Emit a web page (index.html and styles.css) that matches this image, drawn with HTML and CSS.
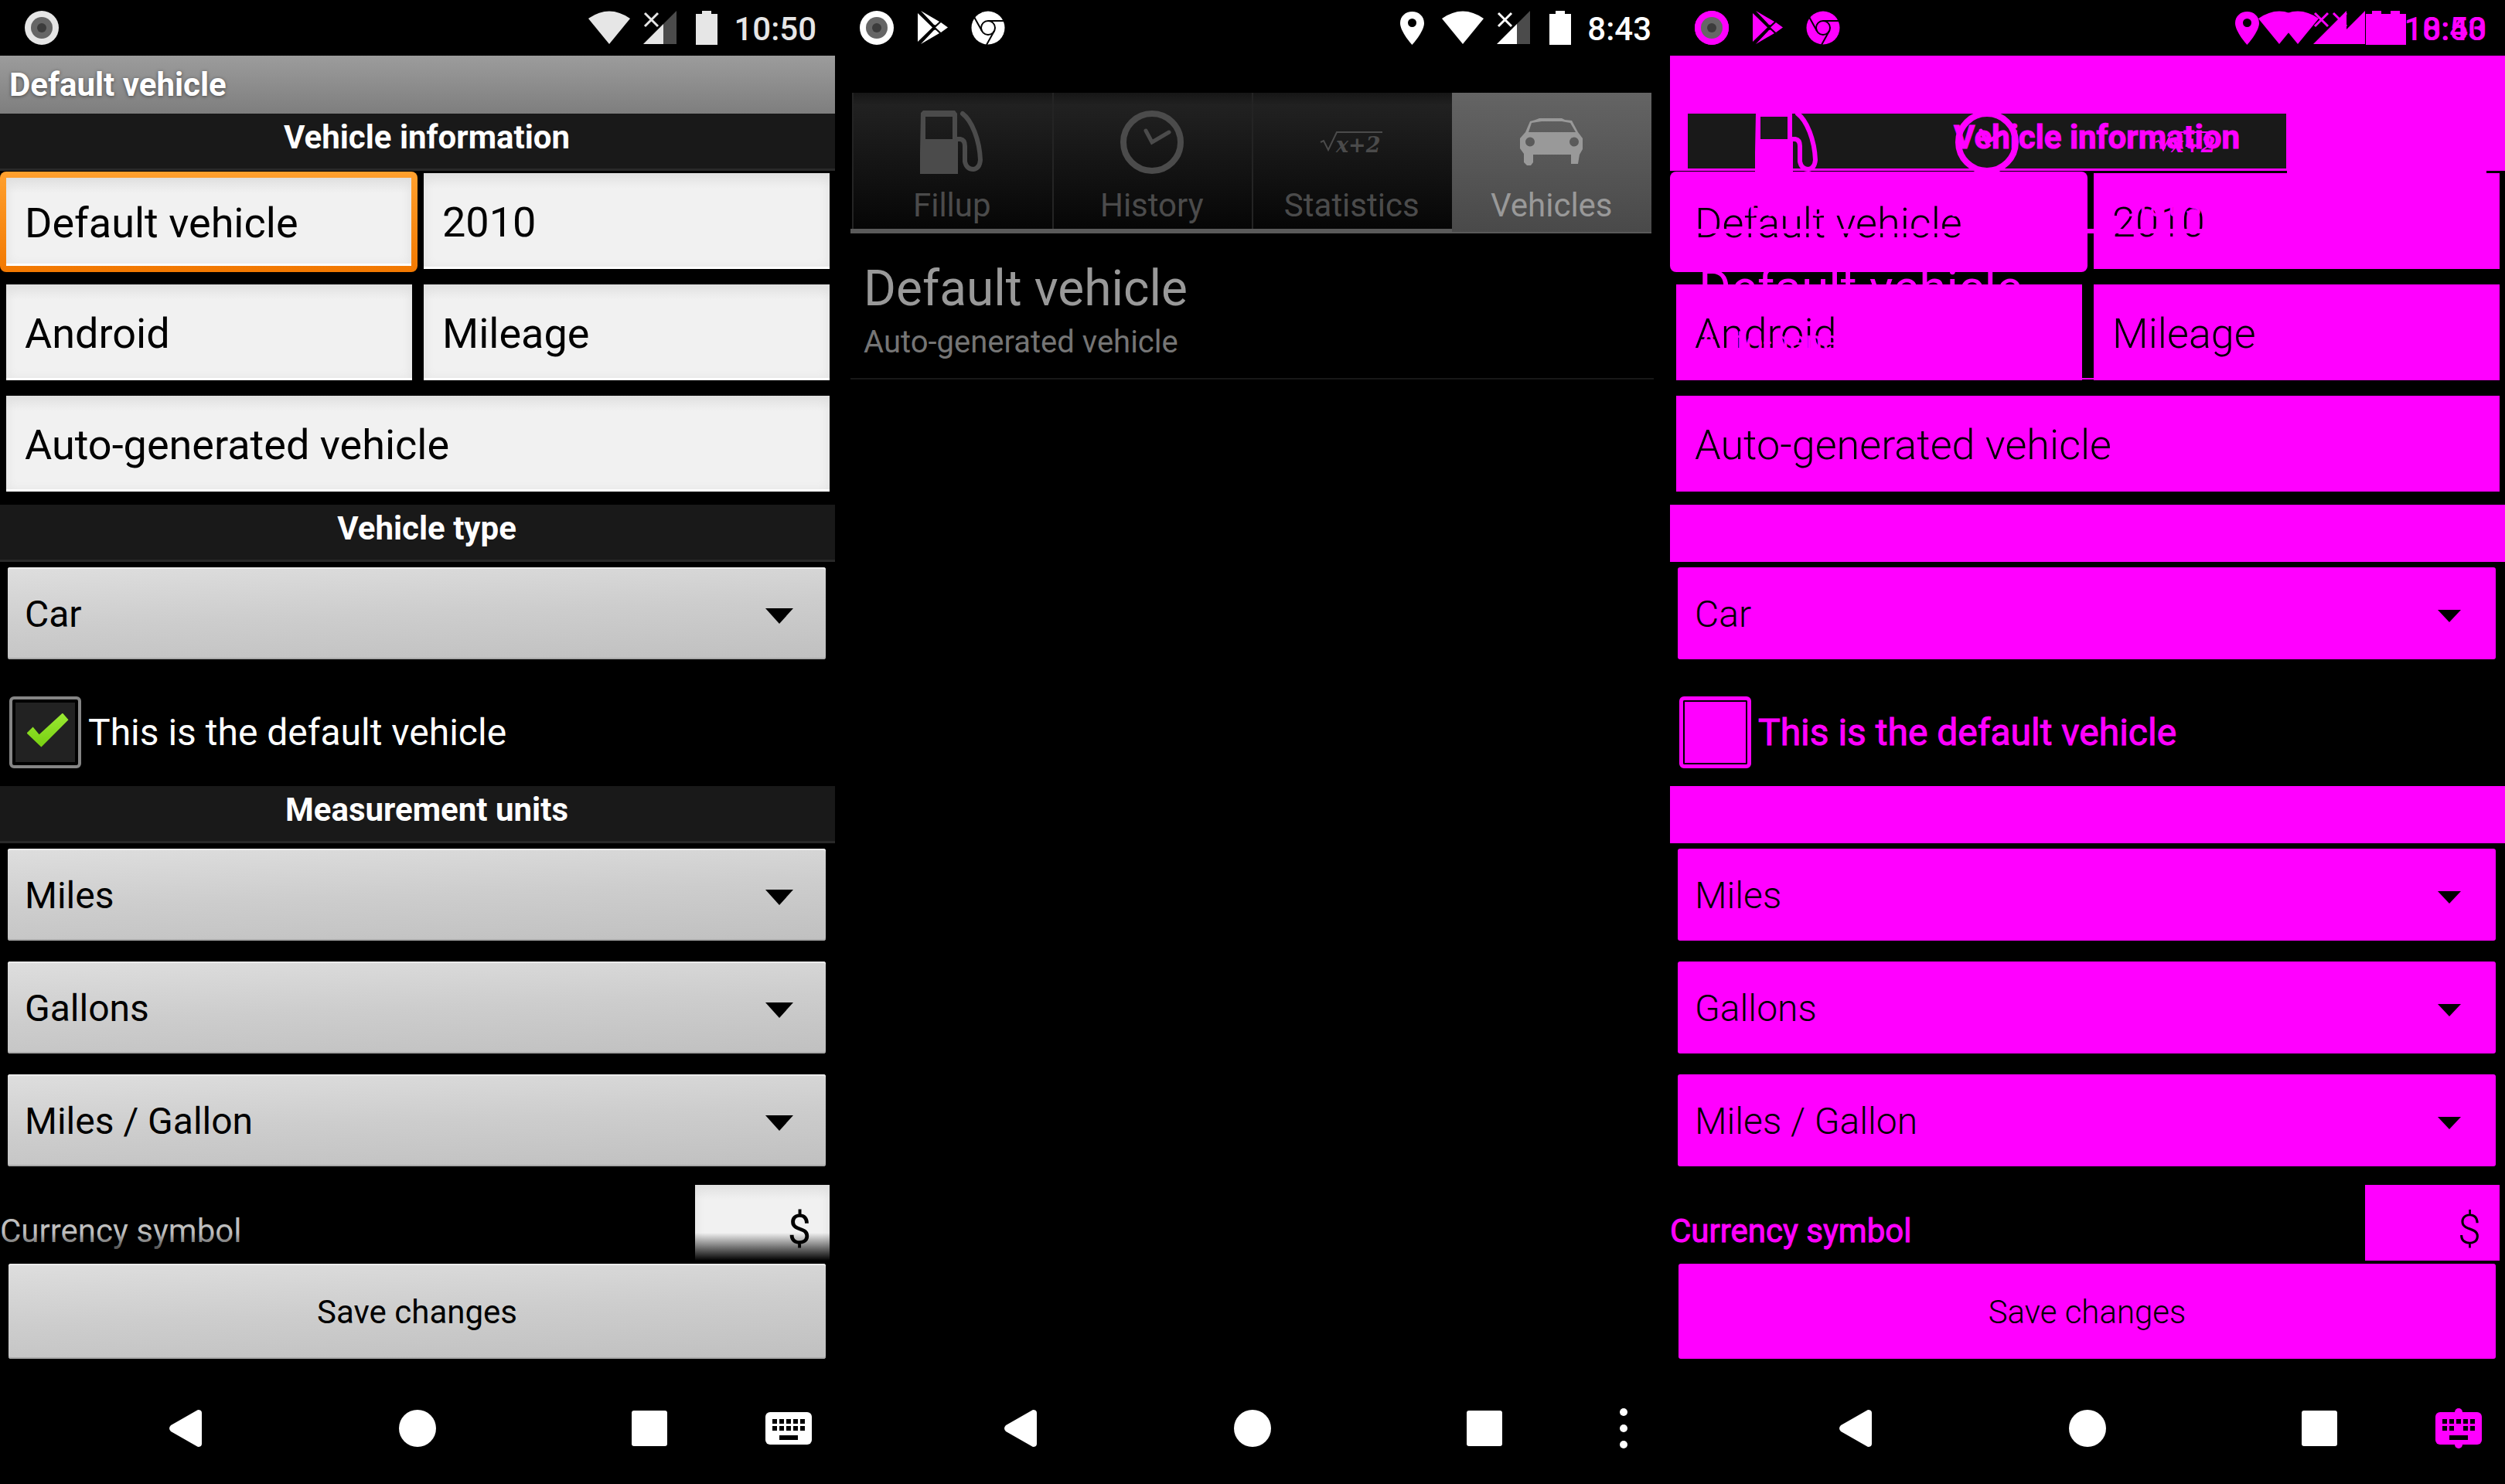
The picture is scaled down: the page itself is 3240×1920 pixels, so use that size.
FILE: index.html
```html
<!DOCTYPE html>
<html lang="en">
<head>
<meta charset="utf-8">
<meta name="viewport" content="width=device-width, initial-scale=1">
<title>Default vehicle</title>
<link rel="stylesheet" href="styles.css">
</head>
<body>
<svg class="sprite" aria-hidden="true">
  <symbol id="record" viewBox="0 0 44 44"><circle cx="22" cy="22" r="22" fill="currentColor"/><circle cx="22" cy="22" r="14" fill="#666"/><circle cx="22" cy="22" r="6" fill="#3c3c3c"/></symbol>
  <symbol id="play" viewBox="0 0 44 44"><path fill="currentColor" d="M3 3L22 21.500L3 40zM7 0L31 14L26 18.500L24 18zM33 15L42 21.500L33 28L26 21.500zM7 43L31 29L26 24.500L24 25z"/></symbol>
  <symbol id="chrome" viewBox="0 0 44 44"><circle cx="22" cy="22" r="21.500" fill="currentColor"/><g fill="none" stroke="#000" stroke-width="2"><circle cx="22" cy="22" r="9"/><path d="M22 13H42M4 8L14 26M30 26L20 44"/></g></symbol>
  <symbol id="pin" viewBox="0 0 31 44"><path fill="currentColor" fill-rule="evenodd" d="M15.500 1C7 1 0 7 0 16C0 27 15.500 44 15.500 44S31 27 31 16C31 7 24 1 15.500 1zM15.500 10a5.500 5.500 0 1 1 0 11a5.500 5.500 0 1 1 0-11z"/></symbol>
  <symbol id="wifi" viewBox="0 0 54 44"><path fill="currentColor" d="M27 43L0 10Q27-9 54 10z"/></symbol>
  <symbol id="signal" viewBox="0 0 43 44"><path class="signal-rest" d="M26 17L43 0V43H26z"/><path fill="currentColor" d="M0 43L26 17V43z"/><path fill="none" stroke="currentColor" stroke-width="3" d="M2 3L19 20M19 3L2 20"/></symbol>
  <symbol id="battery" viewBox="0 0 28 44"><path fill="currentColor" d="M8 0H20V4H28V44H0V4H8z"/></symbol>
  <symbol id="pump" viewBox="0 0 82 82"><path fill="currentColor" fill-rule="evenodd" d="M4 0H45L48 4V34H49V82H0V54L1 3zM7 8H42V37H7z"/><path fill="none" stroke="currentColor" stroke-width="6" stroke-linecap="round" d="M48 37H52Q58 38 58 46V66Q60 76 69 76Q77 75 78 64C77 38 67 13 55 4"/></symbol>
  <symbol id="history" viewBox="0 0 82 82"><g fill="none" stroke="currentColor"><circle cx="41" cy="41" r="37" stroke-width="8"/><path stroke-width="5" stroke-linecap="round" d="M33 26L41 41L63 28"/></g></symbol>
  <symbol id="car" viewBox="0 0 82 82"><path fill="currentColor" fill-rule="evenodd" transform="translate(0 9)" d="M25 1H54L58 3L67 4L75 19L81 27V41L77 48L75 60H66V48H17V58L14 62H9L5 58V47L0 40V27L7 19L13 5L20 3zM15 7L28 5H54L65 7L72 19H11zM13 25.500a6 6 0 1 0 0 12a6 6 0 1 0 0-12zM70 25.500a6 6 0 1 0 0 12a6 6 0 1 0 0-12z"/></symbol>
  <symbol id="back" viewBox="0 0 48 48"><path fill="currentColor" d="M40 0Q45 0 45 4V44Q45 48 40 48L5 28Q1 24 5 20z"/></symbol>
  <symbol id="home" viewBox="0 0 48 48"><circle cx="24" cy="24" r="24" fill="currentColor"/></symbol>
  <symbol id="recent" viewBox="0 0 48 48"><rect x="1" y="1" width="46" height="46" rx="3" fill="currentColor"/></symbol>
  <symbol id="keyboard" viewBox="0 0 60 42"><rect width="60" height="42" rx="6" fill="currentColor"/><path d="M9 9h6v6H9zM18 9h6v6H18zM27 9h6v6H27zM36 9h6v6H36zM45 9h6v6H45zM9 18h6v6H9zM18 18h6v6H18zM27 18h6v6H27zM36 18h6v6H36zM45 18h6v6H45zM18 30h24v6H18z"/></symbol>
  <symbol id="more" viewBox="0 0 12 54"><g fill="currentColor"><circle cx="6" cy="6" r="5"/><circle cx="6" cy="27" r="5"/><circle cx="6" cy="48" r="5"/></g></symbol>
</svg>

<main class="screens">
  <section class="screen screen-form" aria-label="Vehicle form">
    <header class="status">
      <svg class="ic-square"><use href="#record"/></svg>
      <div class="status-right"><svg class="ic-wifi"><use href="#wifi"/></svg><svg class="ic-signal"><use href="#signal"/></svg><svg class="ic-battery"><use href="#battery"/></svg><time>10:50</time></div>
    </header>
    <form class="form">
      <h1 class="title">Default vehicle</h1>
      <h2 class="section">Vehicle information</h2>
      <div class="fields">
        <div class="field focused"><input aria-label="Title" value="Default vehicle"></div>
        <div class="field"><input aria-label="Year" value="2010"></div>
        <div class="field"><input aria-label="Make" value="Android"></div>
        <div class="field"><input aria-label="Model" value="Mileage"></div>
        <div class="field wide"><input aria-label="Description" value="Auto-generated vehicle"></div>
      </div>
      <h2 class="section">Vehicle type</h2>
      <div class="spinners"><div class="spinner"><select aria-label="Vehicle type"><option>Car</option></select></div></div>
      <label class="check"><input type="checkbox" checked><span>This is the default vehicle</span></label>
      <h2 class="section">Measurement units</h2>
      <div class="spinners">
        <div class="spinner"><select aria-label="Distance"><option>Miles</option></select></div>
        <div class="spinner"><select aria-label="Volume"><option>Gallons</option></select></div>
        <div class="spinner"><select aria-label="Economy"><option>Miles / Gallon</option></select></div>
      </div>
      <div class="currency"><label for="currency">Currency symbol</label><input id="currency" value="$"></div>
      <button class="save" type="button">Save changes</button>
    </form>
    <nav class="navbar">
      <button aria-label="Back"><svg><use href="#back"/></svg></button>
      <button aria-label="Home"><svg><use href="#home"/></svg></button>
      <button aria-label="Recent"><svg><use href="#recent"/></svg></button>
      <button aria-label="Keyboard"><svg class="ic-keyboard"><use href="#keyboard"/></svg></button>
    </nav>
  </section>

  <section class="screen screen-list" aria-label="Vehicle list">
    <header class="status">
      <svg class="ic-square"><use href="#record"/></svg><svg class="ic-square"><use href="#play"/></svg><svg class="ic-square"><use href="#chrome"/></svg>
      <div class="status-right"><svg class="ic-pin"><use href="#pin"/></svg><svg class="ic-wifi"><use href="#wifi"/></svg><svg class="ic-signal"><use href="#signal"/></svg><svg class="ic-battery"><use href="#battery"/></svg><time>8:43</time></div>
    </header>
    <div class="list">
      <nav class="tabs">
        <a href="#fillup"><svg><use href="#pump"/></svg>Fillup</a>
        <a href="#hist"><svg><use href="#history"/></svg>History</a>
        <a href="#stats"><svg viewBox="0 0 82 82"><path fill="none" stroke="currentColor" stroke-width="2" d="M1 41L5 39L11 51L22 28H81"/><text class="formula" x="21" y="54" fill="currentColor">x+2</text></svg>Statistics</a>
        <a href="#vehicles" class="selected"><svg><use href="#car"/></svg>Vehicles</a>
      </nav>
      <article class="item"><h2>Default vehicle</h2><p>Auto-generated vehicle</p></article>
    </div>
    <nav class="navbar">
      <button aria-label="Back"><svg><use href="#back"/></svg></button>
      <button aria-label="Home"><svg><use href="#home"/></svg></button>
      <button aria-label="Recent"><svg><use href="#recent"/></svg></button>
      <button aria-label="More"><svg class="ic-more"><use href="#more"/></svg></button>
    </nav>
  </section>

  <section class="screen screen-form diff" aria-label="Difference">
    <header class="status">
      <svg class="ic-square"><use href="#record"/></svg>
      <div class="status-right"><svg class="ic-wifi"><use href="#wifi"/></svg><svg class="ic-signal"><use href="#signal"/></svg><svg class="ic-battery"><use href="#battery"/></svg><time>10:50</time></div>
    </header>
    <form class="form">
      <div class="title"></div>
      <h2 class="section shared">Vehicle information</h2>
      <div class="fields">
        <div class="field focused"><input aria-label="Title" value="Default vehicle"></div>
        <div class="field"><input aria-label="Year" value="2010"></div>
        <div class="field"><input aria-label="Make" value="Android"></div>
        <div class="field"><input aria-label="Model" value="Mileage"></div>
        <div class="field wide"><input aria-label="Description" value="Auto-generated vehicle"></div>
      </div>
      <div class="section"></div>
      <div class="spinners"><div class="spinner"><select aria-label="Vehicle type"><option>Car</option></select></div></div>
      <label class="check"><input type="checkbox"><span>This is the default vehicle</span></label>
      <div class="section"></div>
      <div class="spinners">
        <div class="spinner"><select aria-label="Distance"><option>Miles</option></select></div>
        <div class="spinner"><select aria-label="Volume"><option>Gallons</option></select></div>
        <div class="spinner"><select aria-label="Economy"><option>Miles / Gallon</option></select></div>
      </div>
      <div class="currency"><label for="currency-diff">Currency symbol</label><input id="currency-diff" value="$"></div>
      <button class="save" type="button">Save changes</button>
    </form>
    <nav class="navbar">
      <button aria-label="Back"><svg><use href="#back"/></svg></button>
      <button aria-label="Home"><svg><use href="#home"/></svg></button>
      <button aria-label="Recent"><svg><use href="#recent"/></svg></button>
      <button class="changed" aria-label="Keyboard"><svg class="ic-keyboard"><use href="#keyboard"/></svg></button>
    </nav>

    <div class="overlay screen-list" aria-hidden="true">
      <div class="status">
        <svg class="ic-square"><use href="#record"/></svg><svg class="ic-square"><use href="#play"/></svg><svg class="ic-square"><use href="#chrome"/></svg>
        <div class="status-right"><svg class="ic-pin"><use href="#pin"/></svg><svg class="ic-wifi"><use href="#wifi"/></svg><svg class="ic-signal"><use href="#signal"/></svg><svg class="ic-battery"><use href="#battery"/></svg><time>8:43</time></div>
      </div>
      <div class="list">
        <div class="tabs">
          <span><svg><use href="#pump"/></svg>Fillup</span>
          <span><svg><use href="#history"/></svg>History</span>
          <span><svg viewBox="0 0 82 82"><path fill="none" stroke="currentColor" stroke-width="2" d="M1 41L5 39L11 51L22 28H81"/><text class="formula" x="21" y="54" fill="currentColor">x+2</text></svg>Statistics</span>
          <span class="selected"></span>
        </div>
        <div class="item"><h2>Default vehicle</h2><p>Auto-generated vehicle</p></div>
      </div>
      <div class="navbar"><i></i><i></i><i></i><svg class="ic-more"><use href="#more"/></svg></div>
    </div>
  </section>
</main>
</body>
</html>
```

FILE: styles.css
```css
* { box-sizing: border-box; }

body {
  margin: 0;
  background: #000;
  color: #fff;
  font-family: Roboto, "Noto Sans", sans-serif;
  font-size: 42px;
  line-height: 50px;
}

h1, h2, p { margin: 0; font-weight: 400; }
svg { display: block; flex: none; }
input, select, button {
  appearance: none;
  margin: 0;
  border: 0;
  border-radius: 0;
  outline: 0;
  color: #000;
  font: inherit;
}
a { color: inherit; text-decoration: none; }
.sprite { position: absolute; width: 0; height: 0; }

.screens { display: grid; grid-template-columns: repeat(3, minmax(0, 1fr)); min-height: 100vh; }
.screen { display: flex; flex-direction: column; min-height: 100vh; }
.form, .list { flex: 1; }

/* Status bar */
.status { display: flex; align-items: center; gap: 28px; height: 72px; padding: 0 24px 0 32px; }
.screen-form > .status { color: #e6e6e6; }
.status-right { display: flex; align-items: center; gap: 17px; margin-left: auto; }
.status time { padding-top: 3px; font-weight: 500; }
.ic-square { width: 44px; height: 44px; }
.ic-pin { width: 31px; height: 44px; margin-right: 6px; }
.ic-wifi { width: 54px; height: 44px; }
.ic-signal { width: 43px; height: 44px; }
.ic-battery { width: 28px; height: 44px; margin: 0 4px 0 8px; }
.signal-rest { fill: var(--signal-rest, #4b4b4b); }

/* Form */
.title {
  height: 75px;
  padding-left: 12px;
  background: linear-gradient(#9c9c9c, #7e7e7e);
  font-size: 42px;
  font-weight: 700;
  line-height: 75px;
  text-shadow: 0 1px 4px #444;
}
.section {
  height: 74px;
  padding-left: 24px;
  border-bottom: 3px solid #292929;
  background: #191919;
  font-size: 42px;
  font-weight: 700;
  line-height: 62px;
  text-align: center;
}
.fields { display: grid; grid-template-columns: 1fr 1fr; gap: 20px 15px; padding: 3px 7px 17px 8px; }
.field { display: flex; height: 124px; }
.field.wide { grid-column: 1 / -1; }
.field input, .currency input {
  flex: 1;
  width: 100%;
  min-width: 0;
  padding: 3px 24px 0;
  background: linear-gradient(#e2e2e2, #f1f1f1 20px);
  box-shadow: inset 0 -3px #fff, inset 0 0 14px #dedede;
  font-size: 54px;
}
.field.focused {
  height: 130px;
  margin: -2px -7px -4px -8px;
  padding: 8px;
  border-radius: 8px;
  background: linear-gradient(#ffa02e, #f27800);
}

.spinners { display: grid; gap: 27px; padding: 7px 12px 0 10px; }
.spinner { position: relative; display: flex; height: 119px; }
.spinner select, .save {
  border-radius: 3px;
  background: linear-gradient(178deg, #dedede, #cdcdcd 50%, #c0c0c0);
  box-shadow: inset 0 2px #ececec, inset 0 -2px #aaa;
}
.spinner select { flex: 1; padding: 2px 22px 0; font-size: 48px; }
.spinner::after {
  content: "";
  position: absolute;
  right: 42px;
  top: 53px;
  width: 36px;
  height: 20px;
  background: #000;
  clip-path: polygon(0 0, 100% 0, 50% 100%);
  pointer-events: none;
}

.check { display: flex; align-items: center; gap: 9px; padding: 48px 0 23px 12px; font-size: 48px; }
.check input {
  display: grid;
  place-items: center;
  width: 93px;
  height: 93px;
  border: 4px solid #858585;
  border-radius: 6px;
  background: #222;
  box-shadow: inset 0 0 0 4px #000;
}
.check input:checked::before {
  content: "";
  width: 54px;
  height: 44px;
  margin: 0 0 6px 6px;
  background: linear-gradient(#9bea33, #77cf10);
  clip-path: polygon(0 59%, 15% 41%, 30% 63%, 86% 0, 100% 20%, 35% 100%);
}

.currency {
  position: relative;
  display: flex;
  align-items: flex-start;
  justify-content: space-between;
  height: 98px;
  margin-top: 24px;
  padding-right: 7px;
  overflow: hidden;
}
.currency label { padding-top: 35px; color: #bebebe; }
.currency input { flex: none; width: 174px; height: 124px; padding: 0 24px 10px; text-align: right; }
.currency::after {
  content: "";
  position: absolute;
  inset: auto 0 0;
  height: 36px;
  background: linear-gradient(transparent, #000);
}
.save { display: block; width: calc(100% - 23px); height: 123px; margin: 4px 12px 0 11px; padding: 3px 0 0; font-size: 42px; }

/* Bottom navigation */
.navbar {
  display: grid;
  grid-template-columns: 1fr 1fr 1fr 60px;
  place-items: center;
  height: 144px;
  padding: 0 30px 0 90px;
}
.navbar button { padding: 0; background: none; color: #fff; }
.navbar svg { width: 48px; height: 48px; }
.navbar .ic-keyboard { width: 60px; height: 42px; }
.navbar .ic-more { width: 12px; height: 54px; }

/* Vehicle list */
.tabs { display: flex; height: 182px; margin: 48px 24px 0 20px; padding-left: 2px; border-bottom: 6px solid #5a5a5a; color: #4b4b4b; }
.tabs > * {
  display: flex;
  flex: 1;
  flex-direction: column;
  align-items: center;
  gap: 16px;
  padding-top: 23px;
  background: linear-gradient(#161616, #212121 16px, #151515 50%, #060606);
  box-shadow: inset 2px 0 #242424;
}
.tabs svg { width: 82px; height: 82px; }
.tabs .selected { margin-bottom: -6px; background: linear-gradient(#646464, #494949); box-shadow: inset 0 -2px #5a5a5a; color: #999; }
.formula { font: italic 700 27px "DejaVu Serif", serif; }
.item { margin: 0 21px 0 20px; padding: 35px 17px 21px; border-bottom: 2px solid #181818; color: #757575; }
.item h2 { margin-bottom: 7px; color: #999; font-size: 64px; line-height: 74px; }
.item p { font-size: 40px; }

/* Difference view: changed areas are solid magenta */
.diff { position: relative; --signal-rest: #f0f; }
.diff > .status, .overlay { color: #f0f; }
.diff .title { background: #f0f; }
.diff .section { border-color: #f0f; background: #f0f; color: #f0f; }
.diff .section.shared { background: linear-gradient(#191919, #191919) 23px 0 / calc(75% - 36px) 100% no-repeat, #f0f; }
.diff .section, .diff .check, .diff .currency label { -webkit-text-stroke: 1px #f0f; }
.diff .field.focused,
.diff .field input,
.diff .currency input,
.diff .spinner select,
.diff .save { background: #f0f; box-shadow: none; font-weight: 300; }
.diff .spinner::after { right: 45px; top: 55px; width: 30px; height: 16px; }
.diff .check { color: #f0f; }
.diff .check input { border: 5px solid #f0f; background: #f0f; box-shadow: inset 0 0 0 2px #000; }
.diff .currency label { color: #f0f; }
.diff .currency::after { content: none; }
.diff .changed { color: #f0f; }

.overlay { position: absolute; inset: 0; display: flex; flex-direction: column; pointer-events: none; }
.overlay .tabs { border-color: #f0f; color: #f0f; }
.overlay .tabs > * { background: none; box-shadow: none; }
.overlay .tabs .selected { background: #f0f; }
.overlay .item { border-color: #f0f; color: #f0f; }
.overlay .item h2 { color: #f0f; }
```
